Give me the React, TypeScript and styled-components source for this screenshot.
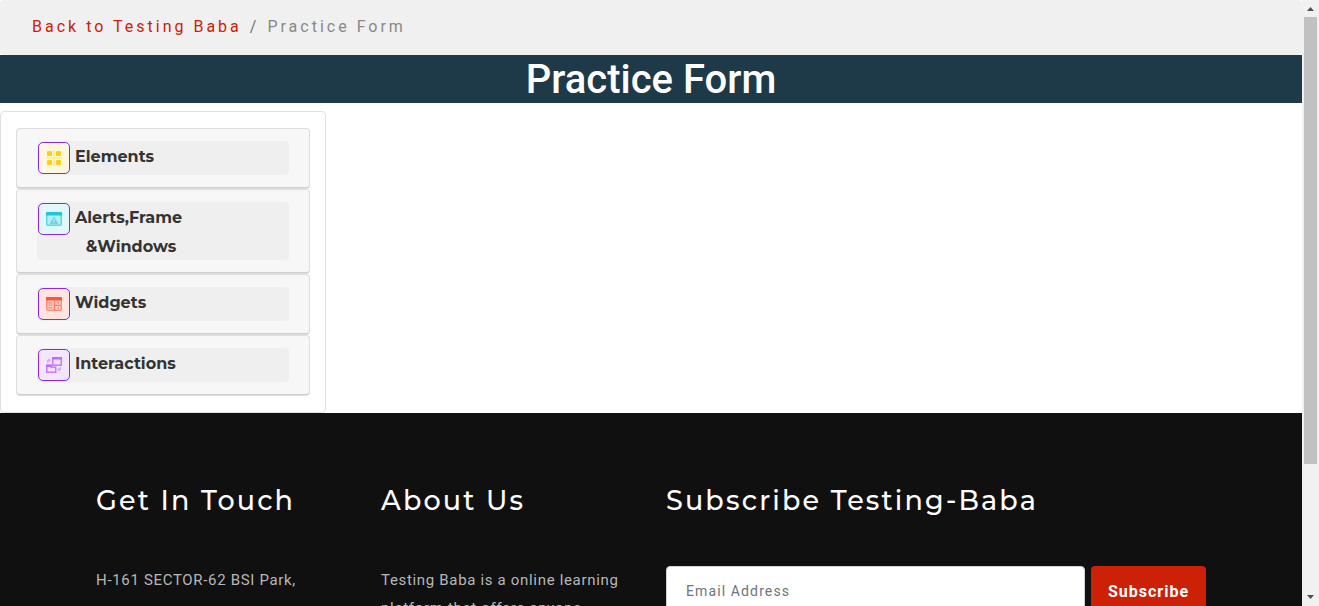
import React from "react";
import styled, { createGlobalStyle } from "styled-components";

const GlobalStyle = createGlobalStyle`
  *, *::before, *::after { box-sizing: border-box; }
  body {
    margin: 0;
    background: #fff;
    color: #212529;
    font-family: Roboto, "Liberation Sans", sans-serif;
    font-size: 16px;
  }
`;

const display = `Montserrat, Inter, sans-serif`;

const Shell = styled.div`
  display: flex;
  height: 100vh;
  overflow: hidden;
`;

const Page = styled.div`
  flex: 1;
  min-width: 0;
  overflow: hidden;
`;

const ScrollTrack = styled.div`
  display: flex;
  flex-direction: column;
  align-items: center;
  width: 17px;
  background: #f1f1f1;
`;

const ScrollArrow = styled.svg`
  display: block;
  width: 17px;
  height: 17px;
  flex: none;
  fill: #505050;
`;

const ScrollLane = styled.div`
  flex: 1;
  width: 13px;
`;

const ScrollThumb = styled.div`
  height: 78.2%;
  background: #c1c1c1;
`;

const Breadcrumb = styled.nav`
  display: flex;
  gap: 8px;
  padding: 13px 32px 15px;
  border-radius: 4px;
  background: #f0f0f0;
  line-height: 27px;
  letter-spacing: 3px;
  color: #6c757d;
`;

const CrumbLink = styled.a`
  color: #cc2106;
  text-decoration: none;
`;

const CurrentCrumb = styled.span`
  color: #888;
`;

const Title = styled.h1`
  margin: 0 0 8px;
  padding-top: 2px;
  background: #1e3948;
  color: #fff;
  font-size: 40px;
  font-weight: 500;
  line-height: 46px;
  text-align: center;
`;

const Sidebar = styled.aside`
  width: 25%;
  padding: 16px 15px 17px;
  border: 1px solid #dee2e6;
  border-radius: 4px;
`;

const MenuCard = styled.div`
  padding: 12px 20px;
  border: 1px solid #dedede;
  border-bottom-color: #cfcfcf;
  border-radius: 4px;
  background: #f7f7f7;
  box-shadow: 0 1px 0 #dedede;

  & + & { margin-top: 1px; }
`;

const MenuButton = styled.button`
  display: flex;
  align-items: flex-start;
  gap: 5px;
  width: 100%;
  min-height: 34px;
  padding: 1px 1px 0;
  border: 0;
  border-radius: 4px;
  background: #efefef;
  color: #333;
  font-family: ${display};
  font-size: 16px;
  font-weight: 700;
  line-height: 29px;
  text-align: center;
`;

const MenuLabel = styled.span`
  margin-bottom: -1px;
`;

const MenuLabelLine = styled.span`
  display: block;

  & + & { padding-left: 5px; }
`;

const IconTile = styled.span<{ $tint: string }>`
  display: flex;
  flex: none;
  align-items: center;
  justify-content: center;
  width: 32px;
  height: 32px;
  border: 1px solid #8a2be2;
  border-radius: 5px;
  background: ${(p) => p.$tint};
`;

const Footer = styled.footer`
  display: grid;
  grid-template-columns: 255px 255px 540px;
  justify-content: center;
  column-gap: 30px;
  padding: 68px 0 80px;
  background: #101010;
`;

const FooterHeading = styled.h2`
  margin: 0 0 45px;
  color: #fff;
  font-family: ${display};
  font-size: 27px;
  font-weight: 500;
  line-height: 40px;
  letter-spacing: 0.08em;
  white-space: nowrap;
`;

const FooterText = styled.p`
  margin: 0;
  color: #b7b7b7;
  font-size: 15px;
  line-height: 28px;
  letter-spacing: 0.045em;
`;

const SubscribeForm = styled.form`
  display: flex;
  gap: 6px;
`;

const EmailInput = styled.input`
  flex: 1;
  min-width: 0;
  height: 50px;
  padding: 0 19px;
  border: 1px solid #ced4da;
  border-radius: 4px;
  background: #fff;
  font-family: inherit;
  font-size: 14px;
  letter-spacing: 0.08em;

  &::placeholder { color: #6c757d; opacity: 1; }
`;

const SubscribeButton = styled.button`
  width: 115px;
  height: 50px;
  padding: 0;
  border: 0;
  border-radius: 4px;
  background: #cc2106;
  color: #fff;
  font-family: inherit;
  font-size: 16px;
  font-weight: 700;
  letter-spacing: 1px;
`;

const iconProps = { width: 16, height: 16, viewBox: "0 0 16 16", "aria-hidden": true } as const;

const ElementsIcon = () => (
  <svg {...iconProps}>
    <path d="M7.200 0h1.600v16H7.200zM0 7.200h16v1.600H0z" fill="#ffeb8f" />
    <g fill="#ffd012">
      <rect x="1" y="1" width="5" height="5" rx="1" />
      <rect x="10" y="1" width="5" height="5" rx="1" />
      <rect x="1" y="10" width="5" height="5" rx="1" />
      <rect x="10" y="10" width="5" height="5" rx="1" />
    </g>
  </svg>
);

const AlertsIcon = () => (
  <svg {...iconProps}>
    <rect x=".75" y="1.750" width="14.500" height="12.500" rx="1" fill="#b5eff4" stroke="#5fd6e2" strokeWidth="1.500" />
    <path d="M0 4.500V2q0-1 1-1h14q1 0 1 1v2.500z" fill="#24c4d7" />
    <path d="M8 5.500l4.500 7.500h-9z" fill="#6fd3df" />
    <path d="M7.500 8h1v2.500h-1zM7.500 11.300h1v1h-1z" fill="#d8f8fb" />
  </svg>
);

const WidgetsIcon = () => (
  <svg {...iconProps}>
    <rect x=".75" y="1.750" width="14.500" height="12.500" rx="1" fill="#ffcdc5" stroke="#ff8f7d" strokeWidth="1.500" />
    <path d="M0 4.500V2q0-1 1-1h14q1 0 1 1v2.500z" fill="#ff5436" />
    <path d="M7.800 4h1.400v10H7.800zM9 8.800h6v1.200H9z" fill="#ff7a64" />
    <path d="M2.500 6.800h3.800M2.500 9.200h3.800M2.500 11.600h3.800M12.200 5.500v2.500M12.200 11v2" stroke="#ff8672" strokeWidth="1.200" />
  </svg>
);

const InteractionsIcon = () => (
  <svg {...iconProps}>
    <path d="M6.750 1h8.500v7.250h-8.500z" fill="#f0dfff" stroke="#c67bfa" strokeWidth="1.500" />
    <path d="M6 0h10v2.500H6z" fill="#c06cf8" />
    <path d="M.75 8.500h4.500v1.750h4.500v5h-9z" fill="#f0dfff" stroke="#c67bfa" strokeWidth="1.500" />
    <path d="M0 7.500h5.500V10H0z" fill="#c06cf8" />
    <path d="M1 6V3.500q0-1 1-1h.5V1L5 3.300 2.500 5.600V4.500H2.200V6zM15 10v2.500q0 1-1 1h-.5V15L11 12.700l2.500-2.300v1.100h.3V10z" fill="#d9aafa" />
  </svg>
);

const menu = [
  { lines: ["Elements"], tint: "#fff8df", Icon: ElementsIcon },
  { lines: ["Alerts,Frame", "&Windows"], tint: "#e1f8fb", Icon: AlertsIcon },
  { lines: ["Widgets"], tint: "#ffe4e0", Icon: WidgetsIcon },
  { lines: ["Interactions"], tint: "#f4e5ff", Icon: InteractionsIcon },
];

export default function App() {
  return (
    <>
      <GlobalStyle />
      <Shell>
        <Page>
          <Breadcrumb aria-label="Breadcrumb">
            <CrumbLink href="#">Back to Testing Baba</CrumbLink>
            <span>/</span>
            <CurrentCrumb aria-current="page">Practice Form</CurrentCrumb>
          </Breadcrumb>
          <Title>Practice Form</Title>
          <Sidebar>
            {menu.map(({ lines, tint, Icon }) => (
              <MenuCard key={lines[0]}>
                <MenuButton type="button">
                  <IconTile $tint={tint}><Icon /></IconTile>
                  <MenuLabel>
                    {lines.map((line) => (
                      <MenuLabelLine key={line}>{line}</MenuLabelLine>
                    ))}
                  </MenuLabel>
                </MenuButton>
              </MenuCard>
            ))}
          </Sidebar>
          <Footer>
            <section>
              <FooterHeading>Get In Touch</FooterHeading>
              <FooterText>H-161 SECTOR-62 BSI Park,</FooterText>
            </section>
            <section>
              <FooterHeading>About Us</FooterHeading>
              <FooterText>Testing Baba is a online learning platform that offers anyone</FooterText>
            </section>
            <section>
              <FooterHeading>Subscribe Testing-Baba</FooterHeading>
              <SubscribeForm>
                <EmailInput type="email" placeholder="Email Address" aria-label="Email Address" />
                <SubscribeButton type="button">Subscribe</SubscribeButton>
              </SubscribeForm>
            </section>
          </Footer>
        </Page>
        <ScrollTrack aria-hidden="true">
          <ScrollArrow viewBox="0 0 17 17"><path d="M5 11h7L8.500 7z" /></ScrollArrow>
          <ScrollLane><ScrollThumb /></ScrollLane>
          <ScrollArrow viewBox="0 0 17 17"><path d="M5 6h7l-3.500 4z" /></ScrollArrow>
        </ScrollTrack>
      </Shell>
    </>
  );
}
